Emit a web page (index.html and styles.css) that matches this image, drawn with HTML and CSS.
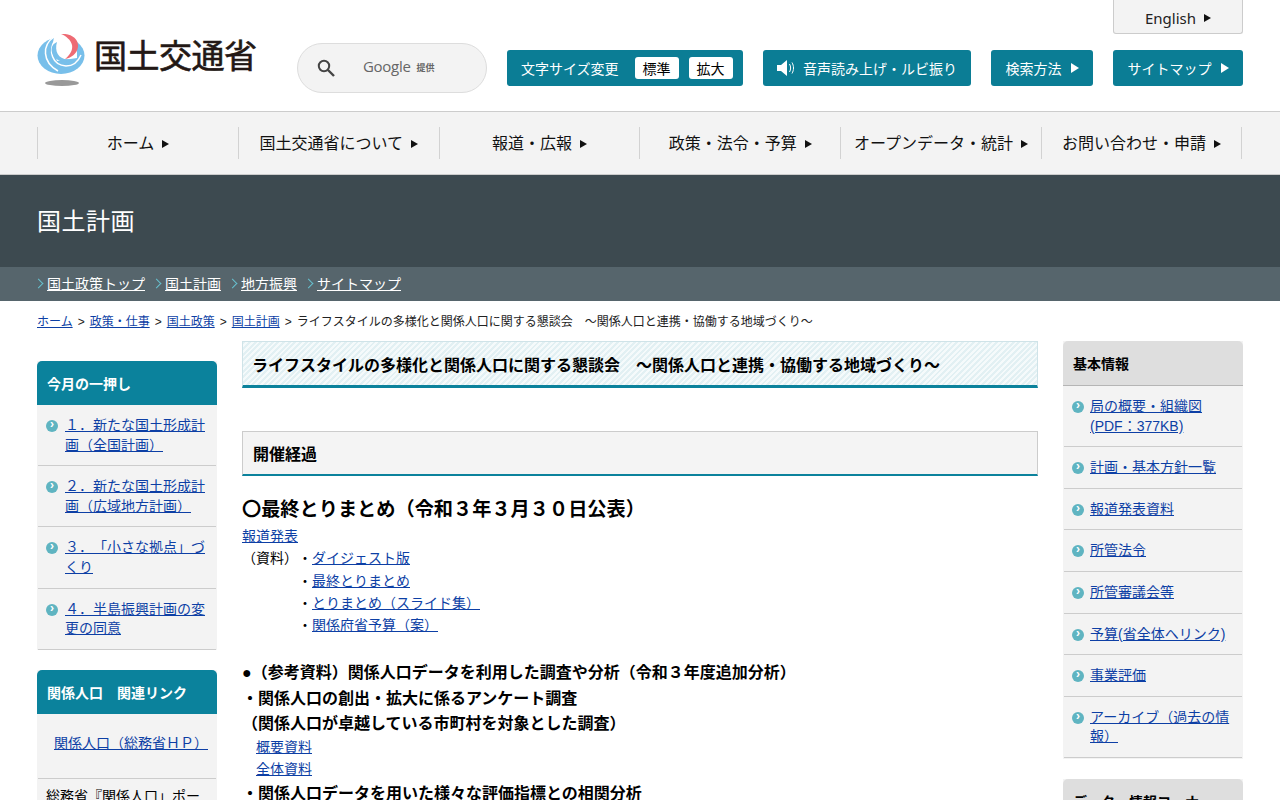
FILE: index.html
```html
<!DOCTYPE html>
<html lang="ja">
<head>
<meta charset="utf-8">
<title>国土計画</title>
<link rel="stylesheet" href="styles.css">
</head>
<body>
<header class="header">
  <div class="wrap header-inner">
    <a class="logo" href="#">
      <svg class="logo-mark" width="48" height="53" viewBox="0 0 48 53">
        <ellipse cx="25" cy="49" rx="17" ry="3" fill="#999"/>
        <ellipse cx="24" cy="21.500" rx="23.500" ry="18.500" fill="#78bfea"/>
        <path d="M17 3C5 11 5 28 21 37" fill="none" stroke="#fff" stroke-width="1.500"/>
        <path d="M18 6C11 17 15 31 29 32C36 32 41 28 44 21" fill="none" stroke="#fff" stroke-width="1.500"/>
        <path d="M17 3C20 0 23 0 27 0L32 0L40 8L40 24L20 27C18 20 15 10 17 3z" fill="#fff"/>
        <path d="M20 8C17 18 22 27 34 25C28 29 20 28 16 21C13 15 15 10 20 8z" fill="#78bfea"/>
        <path d="M24 0C34 -1 42 5 41 13C40 20 34 24 28 25C33 21 36 16 35 11C34 6 29 2 24 0z" fill="#ee6b74"/>
      </svg>
      <span class="logo-text">国土交通省</span>
    </a>
    <div class="search">
      <svg class="search-icon" width="18" height="18" viewBox="0 0 18 18"><circle cx="7" cy="7" r="5.200" fill="none" stroke="#444" stroke-width="2"/><path d="M11 11l6 6" stroke="#444" stroke-width="2.400"/></svg>
      <span class="google">Google</span><span class="provided">提供</span>
    </div>
    <div class="tools">
      <a class="lang" href="#">English<i class="tri tri-dark"></i></a>
      <div class="tool-row">
        <div class="tool tool-size">文字サイズ変更<span class="size-btn size-first">標準</span><span class="size-btn">拡大</span></div>
        <a class="tool tool-voice" href="#">
          <svg width="18" height="16" viewBox="0 0 18 16"><path d="M0 5h4l6-5v16l-6-5H0z" fill="#fff"/><path d="M12.500 4c1.500 2.500 1.500 5.500 0 8M15 2.500c2 3.500 2 7.500 0 11" fill="none" stroke="#fff"/></svg>
          音声読み上げ・ルビ振り
        </a>
        <a class="tool tool-method" href="#">検索方法<i class="tri tri-light"></i></a>
        <a class="tool tool-map" href="#">サイトマップ<i class="tri tri-light"></i></a>
      </div>
    </div>
  </div>
</header>

<nav class="gnav">
  <ul class="wrap gnav-list">
    <li><a href="#">ホーム<i class="tri tri-dark"></i></a></li>
    <li><a href="#">国土交通省について<i class="tri tri-dark"></i></a></li>
    <li><a href="#">報道・広報<i class="tri tri-dark"></i></a></li>
    <li><a href="#">政策・法令・予算<i class="tri tri-dark"></i></a></li>
    <li><a href="#">オープンデータ・統計<i class="tri tri-dark"></i></a></li>
    <li><a href="#">お問い合わせ・申請<i class="tri tri-dark"></i></a></li>
  </ul>
</nav>

<div class="hero"><div class="wrap hero-title">国土計画</div></div>
<div class="subnav">
  <ul class="wrap subnav-list">
    <li><a href="#">国土政策トップ</a></li>
    <li><a href="#">国土計画</a></li>
    <li><a href="#">地方振興</a></li>
    <li><a href="#">サイトマップ</a></li>
  </ul>
</div>

<div class="wrap crumbs"><a href="#">ホーム</a><span class="sep">&gt;</span><a href="#">政策・仕事</a><span class="sep">&gt;</span><a href="#">国土政策</a><span class="sep">&gt;</span><a href="#">国土計画</a><span class="sep">&gt;</span>ライフスタイルの多様化と関係人口に関する懇談会　～関係人口と連携・協働する地域づくり～</div>

<div class="wrap columns">
  <aside class="side side-left">
    <section class="box">
      <h2 class="box-title">今月の一押し</h2>
      <ul class="box-list">
        <li><a href="#">１．新たな国土形成計画（全国計画）</a></li>
        <li><a href="#">２．新たな国土形成計画（広域地方計画）</a></li>
        <li><a href="#">３．「小さな拠点」づくり</a></li>
        <li><a href="#">４．半島振興計画の変更の同意</a></li>
      </ul>
    </section>
    <section class="box">
      <h2 class="box-title">関係人口　関連リンク</h2>
      <div class="plain-item plain-link"><a href="#">関係人口（総務省ＨＰ）</a></div>
      <div class="plain-item plain-text">総務省『関係人口」ポータルサイト</div>
    </section>
  </aside>

  <main class="main">
    <h1 class="page-title">ライフスタイルの多様化と関係人口に関する懇談会　～関係人口と連携・協働する地域づくり～</h1>
    <h2 class="section-title">開催経過</h2>
    <p class="lead">〇最終とりまとめ（令和３年３月３０日公表）</p>
    <p class="line"><a href="#">報道発表</a></p>
    <div class="docs">
      <span class="docs-label">（資料）</span>
      <ul class="docs-list">
        <li>・<a href="#">ダイジェスト版</a></li>
        <li>・<a href="#">最終とりまとめ</a></li>
        <li>・<a href="#">とりまとめ（スライド集）</a></li>
        <li>・<a href="#">関係府省予算（案）</a></li>
      </ul>
    </div>
    <p class="strong strong-first">●（参考資料）関係人口データを利用した調査や分析（令和３年度追加分析）</p>
    <p class="strong">・関係人口の創出・拡大に係るアンケート調査</p>
    <p class="strong">（関係人口が卓越している市町村を対象とした調査）</p>
    <p class="indent indent-first"><a href="#">概要資料</a></p>
    <p class="indent"><a href="#">全体資料</a></p>
    <p class="strong strong-last">・関係人口データを用いた様々な評価指標との相関分析</p>
  </main>

  <aside class="side side-right">
    <section class="box">
      <h2 class="box-title box-title-gray">基本情報</h2>
      <ul class="box-list box-list-right">
        <li><a href="#">局の概要・組織図<br>(PDF：377KB)</a></li>
        <li><a href="#">計画・基本方針一覧</a></li>
        <li><a href="#">報道発表資料</a></li>
        <li><a href="#">所管法令</a></li>
        <li><a href="#">所管審議会等</a></li>
        <li><a href="#">予算(省全体へリンク)</a></li>
        <li><a href="#">事業評価</a></li>
        <li><a href="#">アーカイブ（過去の情報）</a></li>
      </ul>
    </section>
    <section class="box">
      <h2 class="box-title box-title-gray">データ・情報コーナー</h2>
    </section>
  </aside>
</div>
</body>
</html>
```

FILE: styles.css
```css
* { box-sizing: border-box; }
html, body { margin: 0; padding: 0; }
body {
  font-family: "Liberation Sans", "Noto Sans CJK JP", sans-serif;
  font-size: 14px;
  color: #000;
  background: #fff;
  height: 800px;
  overflow: hidden;
  text-spacing-trim: space-all;
}
ul { list-style: none; margin: 0; padding: 0; }
a { color: #0d3fa5; }
p, h1, h2 { margin: 0; }
.wrap { width: 1206px; margin-left: 37px; }

.tri { display: inline-block; width: 0; height: 0; border-style: solid; border-width: 4.500px 0 4.500px 7px; border-color: transparent; margin-left: 8px; vertical-align: 1px; }
.tri-dark { border-left-color: #111; }
.tri-light { border-left-color: #fff; border-width: 5.500px 0 5.500px 8px; vertical-align: 0; }

.header { height: 112px; border-bottom: 1px solid #ccc; }
.header-inner { display: flex; height: 111px; position: relative; }
.logo { display: flex; align-items: flex-start; text-decoration: none; width: 260px; padding-top: 34px; }
.logo-mark { flex: none; }
.logo-text { margin-left: 9px; margin-top: 1px; font-size: 33px; line-height: 44px; letter-spacing: -0.500px; color: #231815; -webkit-text-stroke: 0.600px #231815; }
.search { width: 190px; height: 50px; margin-top: 43px; border: 1px solid #ddd; border-radius: 25px; background: #f3f3f3; display: flex; align-items: center; padding-left: 19px; }
.search-icon { flex: none; }
.google { margin-left: 28px; margin-top: -4px; font-family: "Open Sans", sans-serif; font-size: 15px; color: #666; letter-spacing: -0.300px; }
.provided { margin-left: 6px; margin-top: -2px; font-size: 9px; font-weight: bold; color: #666; }
.tools { margin-left: 20px; flex: 1; position: relative; }
.lang { position: absolute; right: 0; top: 0; width: 130px; height: 34px; background: #f3f3f3; border: 1px solid #ccc; border-top: 0; border-radius: 0 0 3px 3px; color: #222; text-decoration: none; font-family: "Noto Sans", sans-serif; font-size: 15px; display: flex; align-items: center; justify-content: center; padding-top: 3px; }
.lang .tri { border-width: 4px 0 4px 7px; margin-left: 8px; }
.tool-row { display: flex; justify-content: space-between; margin-top: 50px; }
.tool { height: 36px; background: #0b7d95; color: #fff; border-radius: 3px; display: flex; align-items: center; justify-content: center; text-decoration: none; font-size: 14px; white-space: nowrap; }
.tool .tri { margin-left: 9px; }
.tool-size { width: 236px; justify-content: flex-start; padding-left: 14px; }
.tool-voice { width: 208px; gap: 8px; }
.tool-method { width: 102px; }
.tool-map { width: 130px; }
.size-btn { width: 44px; height: 22px; background: #fff; color: #000; border-radius: 3px; font-size: 14px; display: flex; align-items: center; justify-content: center; margin-left: 10px; }
.size-first { margin-left: 16px; }

.gnav { height: 63px; background: #f3f3f3; border-bottom: 1px solid #ccc; padding-top: 15px; }
.gnav-list { display: flex; height: 32px; border-left: 1px solid #d2d2d2; }
.gnav-list li { flex: 0 0 200.800px; border-right: 1px solid #d2d2d2; display: flex; align-items: center; justify-content: center; padding-bottom: 2px; }
.gnav-list li:last-child { flex-basis: 200px; }
.gnav-list a { color: #111; text-decoration: none; font-size: 16px; white-space: nowrap; }

.hero { height: 92px; background: #3d4a50; }
.hero-title { color: #fff; font-size: 24px; line-height: 93px; letter-spacing: 0.500px; }
.subnav { height: 34px; background: #56656c; }
.subnav-list { display: flex; height: 34px; align-items: center; padding-bottom: 2px; }
.subnav-list li { margin-right: 10px; padding-left: 10px; position: relative; }
.subnav-list li::before { content: ""; position: absolute; left: -2px; top: 50%; margin-top: -3px; width: 6px; height: 6px; border-top: 1px solid #66c0cf; border-right: 1px solid #66c0cf; transform: rotate(45deg); }
.subnav-list a { color: #fff; font-size: 14px; }

.crumbs { font-size: 12px; line-height: 18px; margin-top: 12px; color: #222; white-space: nowrap; }
.sep { margin: 0 5px; }

.columns { display: flex; gap: 25px; margin-top: 10px; align-items: flex-start; }
.side { width: 180px; flex: none; }
.side-left { padding-top: 20px; }
.main { width: 796px; flex: none; }
.box { margin-bottom: 20px; background: #f3f3f3; }
.box-title { background: #0b829c; color: #fff; font-size: 14px; font-weight: bold; height: 44px; line-height: 46px; padding-left: 10px; border-radius: 5px 5px 0 0; white-space: nowrap; }
.box-title-gray { background: #dedede; color: #000; height: 45px; line-height: 47px; border-bottom: 1px solid #b5b5b5; }
.box-list li { position: relative; padding: 11px 8px 10px 27px; border-bottom: 1px solid #ccc; margin: 0 1px; line-height: 19.600px; }
.box-list-right { padding-bottom: 1px; }
.box-list-right li { padding-left: 26px; padding-right: 8px; }
.box-list li::before { content: "›"; position: absolute; left: 8px; top: 15px; width: 12px; height: 12px; border-radius: 50%; background: #5fb4c1; color: #fff; font-size: 12px; font-weight: bold; line-height: 9px; text-align: center; }
.plain-item { margin: 0 1px; padding: 0 8px; line-height: 20px; }
.plain-link { height: 65px; padding: 19px 0 0 16px; border-bottom: 1px solid #ccc; }
.plain-text { padding-top: 7px; }

.page-title { height: 47px; border: 1px solid #cfe3e8; border-bottom: 3px solid #0b829c; background: repeating-linear-gradient(135deg, #e2f0f3 0 2px, #f5fafb 2px 4px); font-size: 16px; line-height: 47px; padding-left: 9px; white-space: nowrap; }
.section-title { height: 45px; margin-top: 43px; border: 1px solid #ccc; border-bottom: 2px solid #0b829c; background: #f4f4f4; font-size: 16px; line-height: 45px; padding-left: 10px; }
.lead { font-size: 19.200px; font-weight: bold; line-height: 28px; margin-top: 20px; margin-bottom: 1px; }
.line { line-height: 22px; }
.docs { display: flex; line-height: 22.300px; margin-top: 0.300px; }
.docs-label { width: 56px; }
.lead, .strong { white-space: nowrap; }
.strong { font-size: 16px; font-weight: bold; line-height: 25.500px; }
.strong-first { margin-top: 23.700px; }
.strong-last { margin-top: 1px; }
.indent { padding-left: 14px; line-height: 22px; }
.indent-first { margin-top: -1px; }
```
